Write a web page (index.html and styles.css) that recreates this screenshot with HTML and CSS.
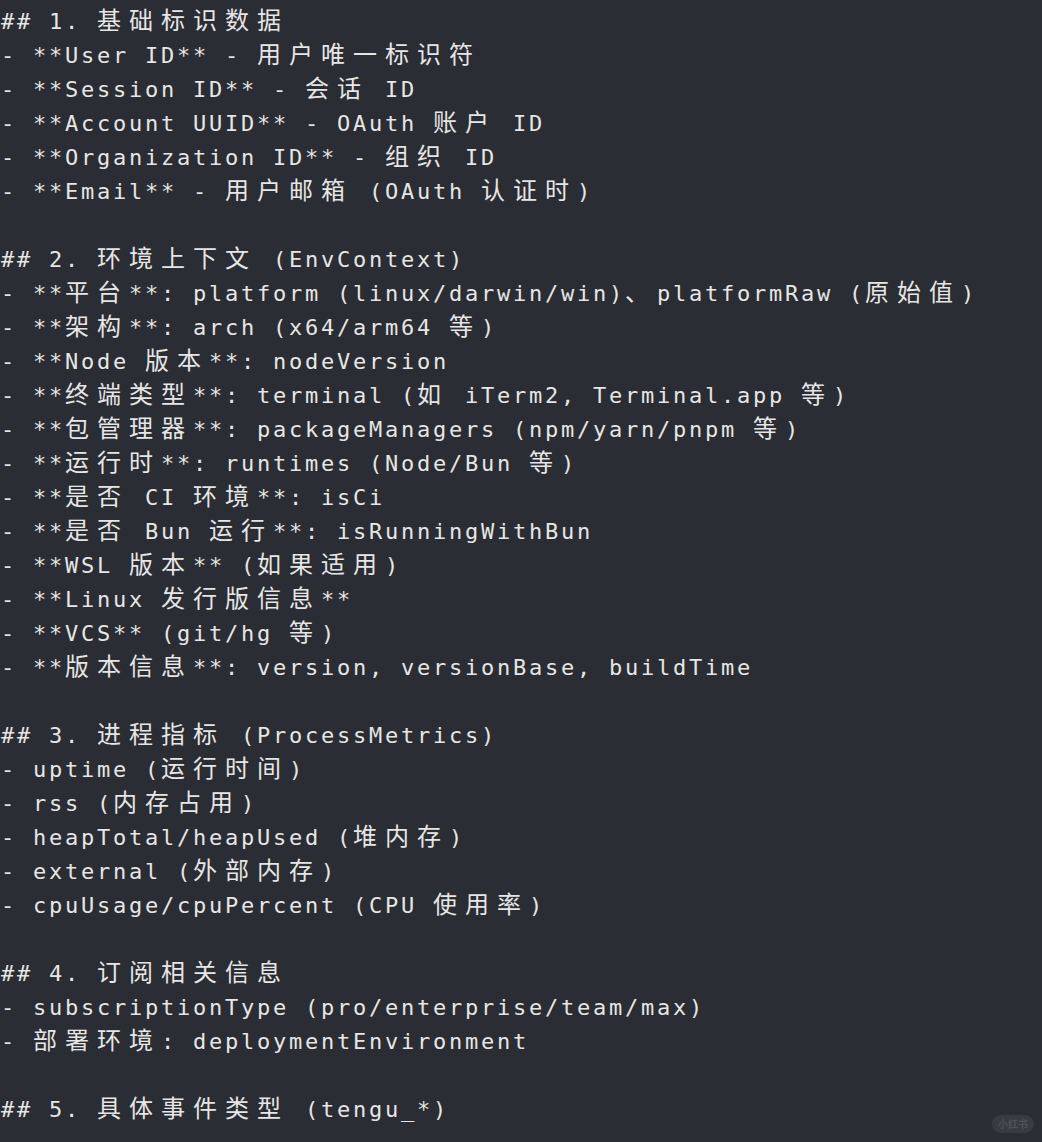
FILE: index.html
```html
<!DOCTYPE html>
<html lang="zh-CN">
<head>
<meta charset="utf-8">
<title>Telemetry notes</title>
<link rel="stylesheet" href="styles.css">
</head>
<body>
<main class="term">
<div class="line">## 1. <span class="w">基础标识数据</span></div>
<div class="line">- **User ID** - <span class="w">用户唯一标识符</span></div>
<div class="line">- **Session ID** - <span class="w">会话</span> ID</div>
<div class="line">- **Account UUID** - OAuth <span class="w">账户</span> ID</div>
<div class="line">- **Organization ID** - <span class="w">组织</span> ID</div>
<div class="line">- **Email** - <span class="w">用户邮箱</span> (OAuth <span class="w">认证时</span>)</div>
<div class="line"></div>
<div class="line">## 2. <span class="w">环境上下文</span> (EnvContext)</div>
<div class="line">- **<span class="w">平台</span>**: platform (linux/darwin/win)<span class="w">、</span>platformRaw (<span class="w">原始值</span>)</div>
<div class="line">- **<span class="w">架构</span>**: arch (x64/arm64 <span class="w">等</span>)</div>
<div class="line">- **Node <span class="w">版本</span>**: nodeVersion</div>
<div class="line">- **<span class="w">终端类型</span>**: terminal (<span class="w">如</span> iTerm2, Terminal.app <span class="w">等</span>)</div>
<div class="line">- **<span class="w">包管理器</span>**: packageManagers (npm/yarn/pnpm <span class="w">等</span>)</div>
<div class="line">- **<span class="w">运行时</span>**: runtimes (Node/Bun <span class="w">等</span>)</div>
<div class="line">- **<span class="w">是否</span> CI <span class="w">环境</span>**: isCi</div>
<div class="line">- **<span class="w">是否</span> Bun <span class="w">运行</span>**: isRunningWithBun</div>
<div class="line">- **WSL <span class="w">版本</span>** (<span class="w">如果适用</span>)</div>
<div class="line">- **Linux <span class="w">发行版信息</span>**</div>
<div class="line">- **VCS** (git/hg <span class="w">等</span>)</div>
<div class="line">- **<span class="w">版本信息</span>**: version, versionBase, buildTime</div>
<div class="line"></div>
<div class="line">## 3. <span class="w">进程指标</span> (ProcessMetrics)</div>
<div class="line">- uptime (<span class="w">运行时间</span>)</div>
<div class="line">- rss (<span class="w">内存占用</span>)</div>
<div class="line">- heapTotal/heapUsed (<span class="w">堆内存</span>)</div>
<div class="line">- external (<span class="w">外部内存</span>)</div>
<div class="line">- cpuUsage/cpuPercent (CPU <span class="w">使用率</span>)</div>
<div class="line"></div>
<div class="line">## 4. <span class="w">订阅相关信息</span></div>
<div class="line">- subscriptionType (pro/enterprise/team/max)</div>
<div class="line">- <span class="w">部署环境</span>: deploymentEnvironment</div>
<div class="line"></div>
<div class="line">## 5. <span class="w">具体事件类型</span> (tengu_*)</div>
</main>
<div class="badge">小红书</div>
</body>
</html>
```
FILE: styles.css
```css
html, body {
  margin: 0;
  padding: 0;
  background: #2a2d33;
}

body {
  width: 1042px;
  height: 1142px;
  overflow: hidden;
  position: relative;
}

.term {
  padding: 5px 0 0 1px;
  font-family: "DejaVu Sans Mono", "Liberation Mono", monospace;
  font-size: 22px;
  letter-spacing: 2.755px;
  color: #e6e6e6;
}

.line {
  height: 34px;
  line-height: 34px;
  white-space: pre;
}

.w {
  font-family: "Noto Sans CJK SC", "Noto Sans", sans-serif;
  font-size: 24px;
  letter-spacing: 8px;
  line-height: 1;
}

.badge {
  position: absolute;
  right: 8px;
  bottom: 9px;
  padding: 2px 6px;
  border-radius: 10px;
  background: rgba(255, 255, 255, 0.07);
  color: #4e5157;
  font-family: "Noto Sans CJK SC", sans-serif;
  font-size: 10px;
  font-weight: 700;
  line-height: 14px;
}
```
